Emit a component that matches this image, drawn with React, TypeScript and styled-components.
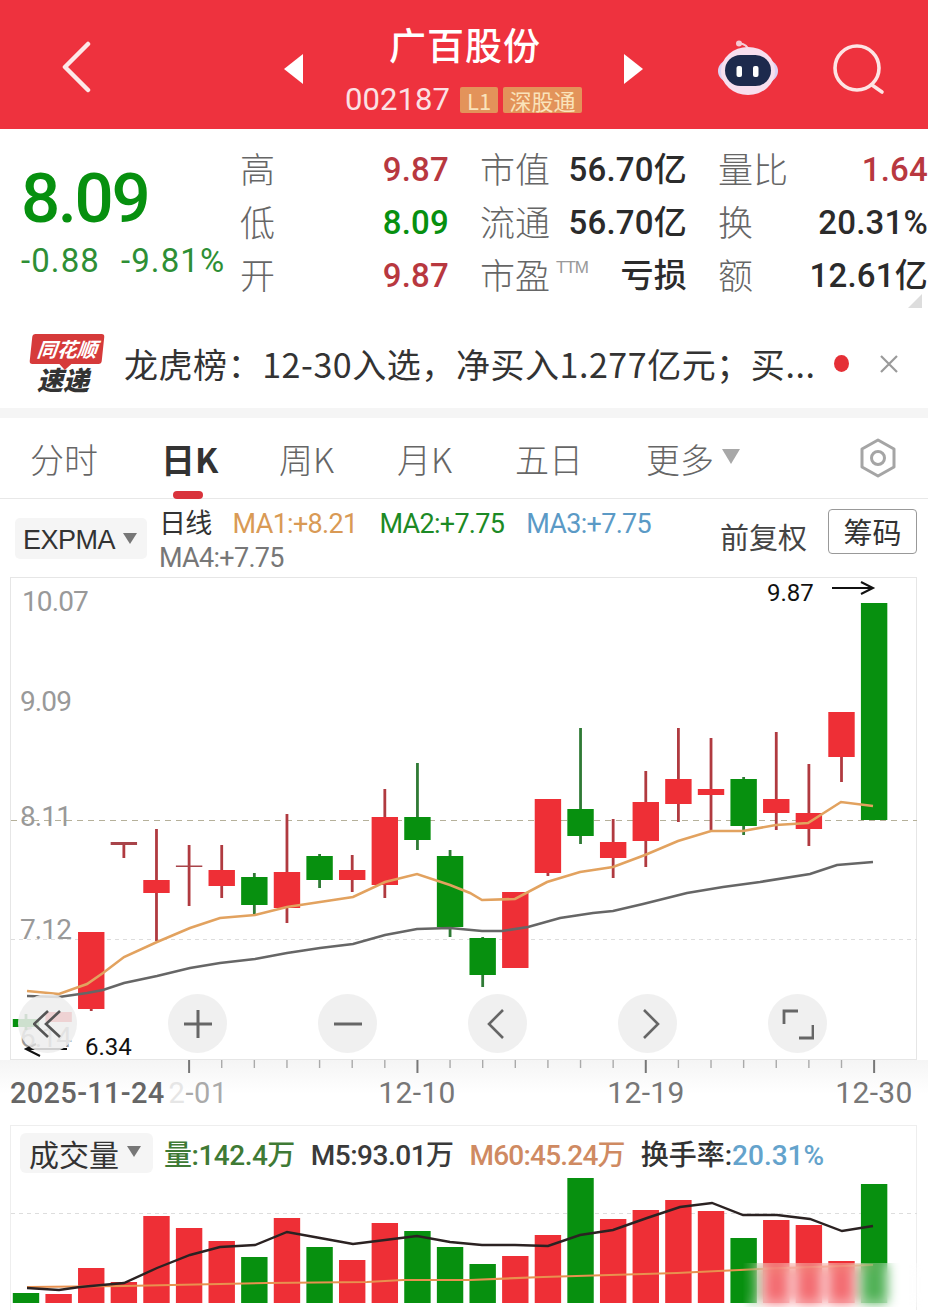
import React from "react";
import styled, { createGlobalStyle } from "styled-components";

const RED = "#ee2f36";
const GREEN = "#07900f";
const NUM = `"Roboto", "Noto Sans CJK SC", sans-serif`;
const CJK = `"Noto Sans CJK SC", "Roboto", sans-serif`;

const GlobalStyle = createGlobalStyle`
    html, body { margin: 0; padding: 0; background: #fff; }
    body { width: 928px; height: 1310px; overflow: hidden; font-family: ${NUM}; }
`;

type Candle = { up: boolean; top: number; bottom: number; high: number; low: number };

const candles: Candle[] = [
    { up: false, top: 1019, bottom: 1027, high: 1014, low: 1030 },
    { up: true, top: 1012, bottom: 1022, high: 1012, low: 1022 },
    { up: true, top: 932, bottom: 1009, high: 932, low: 1011 },
    { up: true, top: 842, bottom: 845, high: 842, low: 858 },
    { up: true, top: 880, bottom: 893, high: 829, low: 941 },
    { up: true, top: 865.5, bottom: 867, high: 845, low: 906 },
    { up: true, top: 870, bottom: 886, high: 845, low: 898 },
    { up: false, top: 877, bottom: 905, high: 873, low: 914 },
    { up: true, top: 872, bottom: 908, high: 814, low: 923 },
    { up: false, top: 856, bottom: 880, high: 854, low: 888 },
    { up: true, top: 870, bottom: 880, high: 855, low: 892 },
    { up: true, top: 817, bottom: 885, high: 789, low: 898 },
    { up: false, top: 817, bottom: 840, high: 763, low: 850 },
    { up: false, top: 856, bottom: 927, high: 850, low: 937 },
    { up: false, top: 938, bottom: 975, high: 937, low: 987 },
    { up: true, top: 892, bottom: 968, high: 892, low: 968 },
    { up: true, top: 799, bottom: 873, high: 799, low: 876 },
    { up: false, top: 809, bottom: 836, high: 728, low: 844 },
    { up: true, top: 842, bottom: 858, high: 819, low: 878 },
    { up: true, top: 802, bottom: 841, high: 771, low: 867 },
    { up: true, top: 779, bottom: 804, high: 728, low: 822 },
    { up: true, top: 789, bottom: 795, high: 738, low: 830 },
    { up: false, top: 779, bottom: 826, high: 777, low: 835 },
    { up: true, top: 799, bottom: 813, high: 732, low: 830 },
    { up: true, top: 813, bottom: 829, high: 764, low: 846 },
    { up: true, top: 712, bottom: 757, high: 712, low: 782 },
    { up: false, top: 603, bottom: 820, high: 603, low: 820 },
];

const ma1 =
    "27,991 59,994 87,984 103,973 124,957 157,942 190,928 220,918 255,915 287,907 320,902 353,897 385,882 417,874 450,885 470,893 482,900 515,899 547,882 580,872 613,867 645,855 678,841 711,831 743,831 776,825 808,823 841,802 873,806";
const ma2 =
    "27,996 59,997 87,993 103,990 124,983 157,976 190,968 220,963 255,959 287,953 320,948 353,944 385,935 417,929 450,928 482,931 502,931 528,927 560,918 593,913 613,911 643,904 687,893 723,887 760,882 810,874 837,865 873,862";
const volTops = [
    1293, 1294, 1268, 1282, 1216, 1228, 1241, 1257, 1218, 1247, 1260, 1223, 1231, 1247, 1264, 1256,
    1235, 1178, 1219, 1210, 1200, 1211, 1238, 1220, 1225, 1261, 1184,
];
const volM5 =
    "27,1288 59,1290 80,1287 124,1283 157,1268 190,1255 220,1247 255,1245 287,1232 320,1238 353,1244 385,1240 417,1236 450,1242 482,1245 515,1245 548,1246 580,1235 613,1230 647,1218 680,1207 712,1203 743,1215 777,1215 810,1219 842,1231 873,1226";
const volM60 = "27,1287 124,1286 267,1283 367,1282 403,1280 470,1280 543,1277 677,1273 760,1269 873,1265";

const colX = (i: number) => 26 + i * 32.62;

const DOWN_RED = "#b8383f";
const INK = "#2b2b2b";

const quoteGroups = [
    {
        width: 208,
        rows: [
            { label: "高", value: "9.87", color: DOWN_RED },
            { label: "低", value: "8.09", color: GREEN },
            { label: "开", value: "9.87", color: DOWN_RED },
        ],
    },
    {
        width: 206,
        rows: [
            { label: "市值", value: "56.70亿", color: INK },
            { label: "流通", value: "56.70亿", color: INK },
            { label: "市盈", value: "亏损", color: INK, ttm: true },
        ],
    },
    {
        width: 209,
        rows: [
            { label: "量比", value: "1.64", color: DOWN_RED },
            { label: "换", value: "20.31%", color: INK },
            { label: "额", value: "12.61亿", color: INK },
        ],
    },
];

const tabs = ["分时", "日K", "周K", "月K", "五日"];

const App = () => {
    return (
        <Page>
            <GlobalStyle />
            <Header>
                <BackSlot>
                    <svg width="34" height="52" viewBox="0 0 34 52">
                        <path d="M28 3 L5 26 L28 49" fill="none" stroke="#fde8e8" strokeWidth="4.5" strokeLinecap="round" strokeLinejoin="round" />
                    </svg>
                </BackSlot>
                <SwitchArrow>
                    <svg width="20" height="30" viewBox="0 0 20 30">
                        <path d="M19 0 L0 15 L19 30 Z" fill="#fff" />
                    </svg>
                </SwitchArrow>
                <Title>
                    <StockName>广百股份</StockName>
                    <CodeRow>
                        <Code>002187</Code>
                        <Tag $minWidth={38}>L1</Tag>
                        <Tag $minWidth={79}>深股通</Tag>
                    </CodeRow>
                </Title>
                <SwitchArrow>
                    <svg width="20" height="30" viewBox="0 0 20 30">
                        <path d="M1 0 L20 15 L1 30 Z" fill="#fff" />
                    </svg>
                </SwitchArrow>
                <RobotSlot>
                    <svg width="62" height="56" viewBox="0 0 62 56">
                        <path d="M31 10 C31 6 27 4 22 3" fill="none" stroke="#f4cfd8" strokeWidth="2.2" />
                        <circle cx="22" cy="3.5" r="3" fill="#f6c9d2" />
                        <rect x="1" y="20" width="60" height="22" rx="11" fill="#dcd2f4" />
                        <ellipse cx="31" cy="31" rx="27" ry="24" fill="#f7dfee" />
                        <rect x="8" y="15" width="46" height="31" rx="15.5" fill="#1d2a4d" />
                        <rect x="19.5" y="26" width="5.5" height="11" rx="2" fill="#fff" />
                        <rect x="36" y="26" width="5.5" height="11" rx="2" fill="#fff" />
                    </svg>
                </RobotSlot>
                <SearchSlot>
                    <svg width="52" height="52" viewBox="0 0 52 52">
                        <circle cx="24" cy="24" r="22" fill="none" stroke="#fde4e4" strokeWidth="3.6" />
                        <path d="M39 41 L49 48" fill="none" stroke="#fde4e4" strokeWidth="3.6" strokeLinecap="round" />
                    </svg>
                </SearchSlot>
            </Header>

            <QuotePanel>
                <PriceBlock>
                    <Price>8.09</Price>
                    <Change>
                        <span>-0.88</span>
                        <span>-9.81%</span>
                    </Change>
                </PriceBlock>
                <QuoteGrid>
                    {quoteGroups.map((group) => (
                        <QuoteGroup key={group.rows[0].label} $width={group.width}>
                            {group.rows.map((q) => (
                                <React.Fragment key={q.label}>
                                    <QuoteLabel>
                                        {q.label}
                                        {q.ttm && <Ttm>TTM</Ttm>}
                                    </QuoteLabel>
                                    <QuoteValue $color={q.color}>{q.value}</QuoteValue>
                                </React.Fragment>
                            ))}
                        </QuoteGroup>
                    ))}
                </QuoteGrid>
                <CornerMark />
            </QuotePanel>

            <NewsBar>
                <NewsLogo>
                    <LogoBubble>同花顺</LogoBubble>
                    <LogoText>速递</LogoText>
                </NewsLogo>
                <NewsText>龙虎榜：12-30入选，净买入1.277亿元；买...</NewsText>
                <NewsDot />
                <svg width="20" height="20" viewBox="0 0 20 20">
                    <path d="M2 2 L18 18 M18 2 L2 18" stroke="#9a9a9a" strokeWidth="2.2" />
                </svg>
            </NewsBar>
            <Spacer />

            <TabBar>
                {tabs.map((t, i) => (
                    <Tab key={t} $active={i === 1}>
                        {t}
                    </Tab>
                ))}
                <Tab>
                    更多
                    <MoreCaret />
                </Tab>
                <SettingSlot>
                    <svg width="42" height="42" viewBox="0 0 42 42">
                        <path d="M21 3 L37 12 V30 L21 39 L5 30 V12 Z" fill="none" stroke="#a5a5a5" strokeWidth="3" strokeLinejoin="round" />
                        <circle cx="21" cy="21" r="6.5" fill="none" stroke="#a5a5a5" strokeWidth="3" />
                    </svg>
                </SettingSlot>
            </TabBar>

            <LegendRow>
                <Selector>
                    EXPMA
                    <SmallCaret />
                </Selector>
                <LegendText>
                    <LegendItem $color="#333" $gap={21}>日线</LegendItem>
                    <LegendItem $color="#d99a55" $gap={22}>MA1:+8.21</LegendItem>
                    <LegendItem $color="#1c8a25" $gap={22}>MA2:+7.75</LegendItem>
                    <LegendItem $color="#5b9ac6" $gap={0}>MA3:+7.75</LegendItem>
                    <LegendItem $color="#777" $gap={0}>MA4:+7.75</LegendItem>
                </LegendText>
                <Adjust>前复权</Adjust>
                <ChipButton>筹码</ChipButton>
            </LegendRow>

            <ChartBox>
                <ChartSvg width="928" height="484" viewBox="0 577 928 484">
                    <line x1="11" x2="917" y1="820.5" y2="820.5" stroke="#b5b09a" strokeDasharray="6 5" />
                    <line x1="11" x2="917" y1="939.5" y2="939.5" stroke="#ddd" strokeDasharray="4 4" />
                    <AxisLabel x="22" y="611">10.07</AxisLabel>
                    <AxisLabel x="20" y="711">9.09</AxisLabel>
                    <AxisLabel x="20" y="826">8.11</AxisLabel>
                    <AxisLabel x="20" y="939">7.12</AxisLabel>
                    <AxisLabel x="20" y="1047">6.14</AxisLabel>
                    {candles.map((c, i) => {
                        const x = colX(i);
                        const color = c.up ? RED : GREEN;
                        const wick = c.up ? "#b03a40" : "#2f7a35";
                        return (
                            <g key={i}>
                                <line x1={x} x2={x} y1={c.high} y2={c.low} stroke={wick} strokeWidth="2.8" />
                                <rect x={x - 13.2} y={c.top} width="26.4" height={c.bottom - c.top} fill={i === 3 || i === 5 ? "#a8444a" : color} />
                            </g>
                        );
                    })}
                    <polyline points={ma2} fill="none" stroke="#666" strokeWidth="2.6" />
                    <polyline points={ma1} fill="none" stroke="#e2a25f" strokeWidth="2.6" />
                    <PriceNote x="767" y="601">9.87</PriceNote>
                    <path d="M832 588 H873 M861 582 L873 588 L861 594" fill="none" stroke="#111" strokeWidth="2" />
                    <PriceNote x="85" y="1055">6.34</PriceNote>
                    <path d="M26 1049 H67 M40 1056 L26 1049 L36 1044" fill="none" stroke="#111" strokeWidth="2" />
                </ChartSvg>
                <ChartControls>
                    <RoundButton>
                        <svg width="30" height="30" viewBox="0 0 30 30">
                            <path d="M15 2 L1 15 L15 28 M27 2 L13 15 L27 28" fill="none" stroke="#555" strokeWidth="2.6" />
                        </svg>
                    </RoundButton>
                    <RoundButton>
                        <svg width="30" height="30" viewBox="0 0 30 30">
                            <path d="M15 1 V29 M1 15 H29" fill="none" stroke="#666" strokeWidth="3" />
                        </svg>
                    </RoundButton>
                    <RoundButton>
                        <svg width="30" height="30" viewBox="0 0 30 30">
                            <path d="M1 15 H29" fill="none" stroke="#666" strokeWidth="3" />
                        </svg>
                    </RoundButton>
                    <RoundButton>
                        <svg width="30" height="30" viewBox="0 0 30 30">
                            <path d="M20 1 L6 15 L20 29" fill="none" stroke="#666" strokeWidth="2.6" />
                        </svg>
                    </RoundButton>
                    <RoundButton>
                        <svg width="30" height="30" viewBox="0 0 30 30">
                            <path d="M11 1 L25 15 L11 29" fill="none" stroke="#666" strokeWidth="2.6" />
                        </svg>
                    </RoundButton>
                    <RoundButton>
                        <svg width="32" height="32" viewBox="0 0 32 32">
                            <path d="M2 16 V3 H16 M17 30 H31 V17" fill="none" stroke="#666" strokeWidth="2.8" />
                        </svg>
                    </RoundButton>
                </ChartControls>
            </ChartBox>

            <AxisRow>
                <svg width="928" height="14" viewBox="0 1060 928 14">
                    {candles.slice(5).map((_, n) => {
                        const i = n + 5;
                        const major = i === 5 || i === 12 || i === 19 || i === 26;
                        return (
                            <line
                                key={i}
                                x1={colX(i)}
                                x2={colX(i)}
                                y1="1060"
                                y2={major ? 1073 : 1068}
                                stroke={major ? "#777" : "#aaa"}
                                strokeWidth={major ? 2 : 1.4}
                            />
                        );
                    })}
                </svg>
                <DateRow>
                    <DateStart>2025-11-24</DateStart>
                    <DateFaded>
                        <DateGhost>2</DateGhost>-01
                    </DateFaded>
                    <DateLabel $width={225}>12-10</DateLabel>
                    <DateLabel $width={229}>12-19</DateLabel>
                    <DateLabel $width={228}>12-30</DateLabel>
                </DateRow>
            </AxisRow>

            <VolumeBox>
                <VolumeLegend>
                    <VolumeSelector>
                        成交量
                        <SmallCaret />
                    </VolumeSelector>
                    <VolumeItem $color="#3f7a35">量:142.4万</VolumeItem>
                    <VolumeItem $color="#3a3a3a">M5:93.01万</VolumeItem>
                    <VolumeItem $color="#cf8a62" $spacing={-0.8}>M60:45.24万</VolumeItem>
                    <VolumeItem $color="#333" $spacing={0}>
                        换手率:<VolumeRate>20.31%</VolumeRate>
                    </VolumeItem>
                </VolumeLegend>
                <VolumeSvg width="928" height="135" viewBox="0 1175 928 135">
                    <line x1="11" x2="917" y1="1213.5" y2="1213.5" stroke="#ddd" strokeDasharray="4 4" />
                    {volTops.map((t, i) => {
                        const up = candles[i].up;
                        return <rect key={i} x={colX(i) - 13.2} y={t} width="26.4" height={1303 - t} fill={up ? RED : GREEN} />;
                    })}
                    <polyline points={volM60} fill="none" stroke="#e8914f" strokeWidth="2.2" />
                    <polyline points={volM5} fill="none" stroke="#2b2222" strokeWidth="2.4" />
                </VolumeSvg>
                <Watermark />
            </VolumeBox>
        </Page>
    );
};

export default App;

const Page = styled.div`
    width: 928px;
    height: 1310px;
    overflow: hidden;
    background: #fff;
`;

const Header = styled.header`
    height: 129px;
    background: #ee323e;
    display: flex;
    align-items: center;
    color: #fff;
`;

const BackSlot = styled.div`
    margin-left: 60px;
    width: 34px;
    display: flex;
    margin-right: 190px;
    margin-top: 5px;
`;

const SwitchArrow = styled.div`
    width: 20px;
    display: flex;
    margin-top: 9px;
`;

const Title = styled.div`
    width: 319px;
    display: flex;
    flex-direction: column;
    align-items: center;
`;

const StockName = styled.div`
    font-family: ${CJK};
    font-size: 37px;
    line-height: 44px;
    font-weight: 500;
    margin-left: 3px;
    margin-top: 10px;
    letter-spacing: 1px;
`;

const CodeRow = styled.div`
    display: flex;
    align-items: center;
    gap: 5px;
    margin-top: 16px;
`;

const Code = styled.span`
    font-size: 31px;
    line-height: 36px;
    margin-right: 5px;
    letter-spacing: 0.1px;
    color: #fbe0e4;
`;

const Tag = styled.span<{ $minWidth: number }>`
    background: #e3935a;
    color: #fae3bb;
    font-family: ${CJK};
    font-size: 22px;
    line-height: 26px;
    height: 26px;
    width: ${(p) => p.$minWidth}px;
    text-align: center;
    border-radius: 2px;
`;

const RobotSlot = styled.div`
    width: 62px;
    margin-left: 74px;
    display: flex;
    margin-top: 7px;
`;

const SearchSlot = styled.div`
    width: 52px;
    margin-left: 54px;
    display: flex;
    margin-top: 11px;
`;

const QuotePanel = styled.section`
    position: relative;
    height: 187px;
    display: flex;
    padding-top: 14px;
    box-sizing: border-box;
`;

const PriceBlock = styled.div`
    width: 241px;
    padding-left: 21px;
    box-sizing: border-box;
`;

const Price = styled.div`
    color: ${GREEN};
    font-size: 69px;
    line-height: 72px;
    margin-top: 20px;
    font-weight: 500;
    letter-spacing: -2.4px;
`;

const Change = styled.div`
    display: flex;
    gap: 21px;
    color: #2e8f35;
    font-size: 33px;
    line-height: 36px;
    margin-top: 8px;
    letter-spacing: 1.1px;
`;

const QuoteGrid = styled.div`
    display: flex;
    gap: 32px;
`;

const QuoteGroup = styled.div<{ $width: number }>`
    width: ${(p) => p.$width}px;
    display: grid;
    grid-template-columns: auto 1fr;
    grid-auto-rows: 53px;
    align-items: center;
`;

const QuoteLabel = styled.div`
    position: relative;
    font-family: ${CJK};
    font-size: 35px;
    font-weight: 300;
    color: #666;
    white-space: nowrap;
    margin: -4px 0 0 -1px;
`;

const Ttm = styled.span`
    position: absolute;
    font-family: "Liberation Sans", sans-serif;
    font-size: 17px;
    color: #999;
    left: 76px;
    top: 10px;
    letter-spacing: -1px;
`;

const QuoteValue = styled.div<{ $color: string }>`
    color: ${(p) => p.$color};
    font-size: 33px;
    line-height: 40px;
    font-family: ${NUM};
    font-weight: 500;
    text-align: right;
    white-space: nowrap;
    letter-spacing: 0.2px;
`;

const CornerMark = styled.div`
    position: absolute;
    right: 6px;
    bottom: 8px;
    width: 0;
    height: 0;
    border-left: 14px solid transparent;
    border-bottom: 14px solid #ddd;
`;

const NewsBar = styled.div`
    height: 92px;
    display: flex;
    align-items: center;
    padding: 3px 0 0 30px;
    box-sizing: border-box;
`;

const NewsLogo = styled.div`
    width: 74px;
    height: 60px;
    display: flex;
    flex-direction: column;
    align-items: center;
`;

const LogoBubble = styled.div`
    position: relative;
    width: 72px;
    height: 30px;
    background: #d63a3a;
    color: #fff;
    border-radius: 3px;
    font-family: ${CJK};
    font-size: 20px;
    font-style: italic;
    font-weight: 700;
    line-height: 30px;
    text-align: center;
    transform: skewX(-6deg);
    &::after {
        content: "";
        position: absolute;
        left: 30px;
        bottom: -6px;
        border-left: 6px solid transparent;
        border-right: 6px solid transparent;
        border-top: 6px solid #d63a3a;
    }
`;

const LogoText = styled.div`
    font-family: ${CJK};
    font-size: 26px;
    line-height: 30px;
    font-weight: 900;
    font-style: italic;
    color: #333;
    margin-right: 8px;
`;

const NewsText = styled.div`
    margin-left: 20px;
    width: 710px;
    font-family: ${CJK};
    font-size: 34px;
    font-weight: 400;
    letter-spacing: 0.55px;
    color: #333;
    white-space: nowrap;
`;

const NewsDot = styled.div`
    width: 15px;
    height: 17px;
    border-radius: 50%;
    background: #e52f36;
    margin-right: 30px;
`;

const Spacer = styled.div`
    height: 10px;
    background: #f5f5f5;
`;

const TabBar = styled.nav`
    height: 80px;
    display: flex;
    align-items: center;
    padding-left: 30px;
    border-bottom: 1px solid #e8e8e8;
    position: relative;
`;

const Tab = styled.div<{ $active?: boolean }>`
    position: relative;
    width: 118px;
    font-family: ${CJK};
    font-size: 34px;
    font-weight: ${(p) => (p.$active ? 700 : 300)};
    color: ${(p) => (p.$active ? "#333" : "#666")};
    white-space: nowrap;
    display: flex;
    align-items: center;
    &:nth-child(1), &:nth-child(5) { width: 131px; }
    ${(p) =>
        p.$active
            ? `&::after {
        content: "";
        position: absolute;
        left: 12px;
        bottom: -16px;
        width: 30px;
        height: 8px;
        border-radius: 4px;
        background: #d9333c;
    }`
            : ""}
`;

const MoreCaret = styled.span`
    margin-left: 8px;
    margin-top: -4px;
    border-left: 9px solid transparent;
    border-right: 9px solid transparent;
    border-top: 15px solid #a8a8a8;
`;

const SettingSlot = styled.div`
    position: absolute;
    right: 29px;
    top: 19px;
    display: flex;
`;

const LegendRow = styled.div`
    height: 78px;
    display: flex;
    padding-left: 15px;
    box-sizing: border-box;
    position: relative;
`;

const Selector = styled.div`
    margin-top: 19px;
    width: 132px;
    height: 41px;
    background: #f5f5f5;
    border-radius: 5px;
    padding: 3px 0 0 8px;
    box-sizing: border-box;
    font-size: 27px;
    line-height: 38px;
    color: #333;
    font-family: "Liberation Sans", sans-serif;
    display: flex;
    align-items: center;
    letter-spacing: -0.5px;
`;

const SmallCaret = styled.span`
    margin-left: 8px;
    margin-top: -3px;
    border-left: 7px solid transparent;
    border-right: 7px solid transparent;
    border-top: 11px solid #777;
`;

const LegendText = styled.div`
    margin-left: 12px;
    margin-top: 8px;
    width: 520px;
    display: flex;
    flex-wrap: wrap;
    align-items: center;
    align-content: flex-start;
`;

const LegendItem = styled.span<{ $color: string; $gap: number }>`
    color: ${(p) => p.$color};
    margin-right: ${(p) => p.$gap}px;
    font-size: 27px;
    line-height: 34px;
    letter-spacing: -0.7px;
    font-family: ${NUM};
    white-space: nowrap;
`;

const Adjust = styled.div`
    position: absolute;
    left: 720px;
    top: 15px;
    font-family: ${CJK};
    font-size: 29px;
    line-height: 44px;
    color: #444;
`;

const ChipButton = styled.div`
    position: absolute;
    left: 828px;
    top: 10px;
    width: 89px;
    height: 45px;
    box-sizing: border-box;
    border: 1px solid #999;
    border-radius: 4px;
    font-family: ${CJK};
    font-size: 29px;
    line-height: 42px;
    text-align: center;
    color: #333;
`;

const ChartBox = styled.div`
    position: relative;
    height: 484px;
    &::before {
        content: "";
        position: absolute;
        left: 10px;
        top: 0;
        width: 907px;
        height: 483px;
        border: 1px solid #e6e6e6;
        box-sizing: border-box;
    }
`;

const ChartSvg = styled.svg`
    display: block;
    position: relative;
`;

const AxisLabel = styled.text`
    font-family: ${NUM};
    font-size: 28px;
    fill: #999;
    letter-spacing: -0.9px;
`;

const PriceNote = styled.text`
    font-family: ${NUM};
    font-size: 24px;
    fill: #111;
`;

const ChartControls = styled.div`
    position: absolute;
    left: 18px;
    top: 417px;
    display: flex;
    gap: 91px;
`;

const RoundButton = styled.div`
    width: 59px;
    height: 59px;
    border-radius: 50%;
    background: rgba(238, 238, 238, 0.86);
    display: flex;
    align-items: center;
    justify-content: center;
`;

const AxisRow = styled.div`
    height: 64px;
    margin-top: -1px;
    background: linear-gradient(180deg, #f5f5f5 0, #fff 34px);
    svg { display: block; }
`;

const DateRow = styled.div`
    display: flex;
    padding-left: 10px;
    margin-top: 2px;
    position: relative;
`;

const DateStart = styled.span`
    font-family: ${NUM};
    font-size: 29px;
    line-height: 34px;
    font-weight: 500;
    color: #666;
    letter-spacing: 0.3px;
`;

const DateFaded = styled.span`
    font-family: ${NUM};
    font-size: 29px;
    line-height: 34px;
    color: #aaa;
    width: 62px;
    margin-left: 4px;
    letter-spacing: 0.6px;
`;

const DateGhost = styled.span`
    color: #e6e6e6;
`;

const DateLabel = styled.span<{ $width: number }>`
    font-family: ${NUM};
    font-size: 30px;
    line-height: 34px;
    color: #777;
    width: ${(p) => p.$width}px;
    text-align: right;
    letter-spacing: 0.3px;
`;

const VolumeBox = styled.div`
    position: relative;
    height: 187px;
    margin-top: 1px;
    &::before {
        content: "";
        position: absolute;
        left: 10px;
        top: 0;
        width: 907px;
        height: 100%;
        border: 1px solid #eee;
        border-bottom: none;
        box-sizing: border-box;
    }
`;

const VolumeLegend = styled.div`
    position: relative;
    height: 50px;
    display: flex;
    align-items: center;
    padding-left: 20px;
    padding-top: 5px;
    box-sizing: border-box;
`;

const VolumeSelector = styled.div`
    width: 133px;
    height: 40px;
    border-radius: 6px;
    background: #f5f5f5;
    font-family: ${CJK};
    font-size: 30px;
    line-height: 40px;
    color: #333;
    display: flex;
    align-items: center;
    padding-left: 9px;
    box-sizing: border-box;
`;

const VolumeItem = styled.span<{ $color: string; $spacing?: number }>`
    margin-left: 11px;
    margin-right: 5px;
    font-family: ${NUM};
    font-size: 28px;
    font-weight: 500;
    letter-spacing: ${(p) => p.$spacing ?? -0.5}px;
    color: ${(p) => p.$color};
    white-space: nowrap;
`;

const VolumeRate = styled.span`
    color: #64a3cc;
`;

const VolumeSvg = styled.svg`
    display: block;
    position: relative;
`;

const Watermark = styled.div`
    position: absolute;
    left: 742px;
    bottom: 5px;
    width: 184px;
    height: 44px;
    backdrop-filter: blur(6px);
    background: rgba(255, 255, 255, 0.3);
    mask-image: linear-gradient(90deg, transparent, #000 12%, #000 88%, transparent);
`;
